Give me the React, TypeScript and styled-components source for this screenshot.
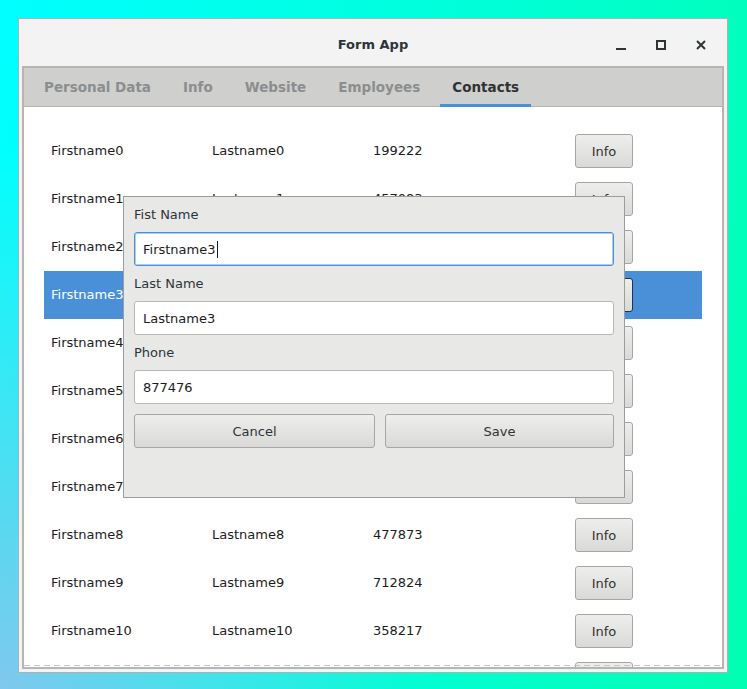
import React from "react"
import styled, { createGlobalStyle } from "styled-components"

const GlobalStyle = createGlobalStyle`
    html, body {
        margin: 0;
        padding: 0;
    }
    body {
        width: 747px;
        height: 689px;
        overflow: hidden;
        font-family: "DejaVu Sans", "Liberation Sans", sans-serif;
        background:
            radial-gradient(ellipse 430px 540px at 0% 100%, rgba(128, 200, 238, 1) 0%, rgba(128, 200, 238, 0) 100%),
            linear-gradient(100deg, #00ffff 0%, #00ffd8 55%, #00ffb2 100%);
    }
`

const Desktop = styled.div`
    padding: 18px 0 0 18px;
`

const Window = styled.div`
    width: 710px;
    height: 655px;
    box-sizing: border-box;
    border: 1px solid #b0b0ae;
    background: #f3f3f3;
    padding: 0 3px 3px;
    display: flex;
    flex-direction: column;
`

const TitleBar = styled.div`
    height: 47px;
    flex: 0 0 47px;
    box-sizing: border-box;
    padding-top: 4px;
    display: grid;
    grid-template-columns: 1fr auto 1fr;
    align-items: center;
    margin: 0 -3px;
`

const Title = styled.div`
    grid-column: 2;
    font-size: 13px;
    font-weight: bold;
    color: #2e3436;
`

const Controls = styled.div`
    grid-column: 3;
    justify-self: end;
    display: flex;
    padding-right: 6px;
`

const ControlButton = styled.div`
    width: 40px;
    height: 30px;
    display: flex;
    align-items: center;
    justify-content: center;
    color: #2e3436;
`

const Notebook = styled.div`
    flex: 1;
    display: flex;
    flex-direction: column;
    border: 2px solid #b5b5b2;
    min-height: 0;
`

const TabBar = styled.div`
    height: 38px;
    flex: 0 0 38px;
    display: flex;
    padding-left: 8px;
    gap: 8px;
    background: #cfcfcd;
    border-bottom: 1px solid #b3b3b0;
`

const Tab = styled.div<{ $active?: boolean }>`
    height: 39px;
    box-sizing: border-box;
    margin-bottom: -1px;
    padding: 1px 12px 0;
    display: flex;
    align-items: center;
    font-size: 13.5px;
    font-weight: bold;
    color: ${props => props.$active ? '#2e3436' : '#8b8e8f'};
    border-bottom: 3px solid ${props => props.$active ? '#4a90d9' : 'transparent'};
`

const Content = styled.div`
    position: relative;
    flex: 1;
    background: #ffffff;
    overflow: hidden;
    padding: 20px;
    &::after {
        content: "";
        position: absolute;
        left: 0;
        right: 0;
        bottom: 1px;
        height: 1px;
        background: repeating-linear-gradient(to right, #c4c4c4 0 6px, transparent 6px 10px);
    }
`

const List = styled.div`
    display: flex;
    flex-direction: column;
`

const Row = styled.div<{ $selected?: boolean }>`
    height: 48px;
    flex: 0 0 48px;
    display: grid;
    grid-template-columns: 161px 161px 202px auto;
    align-items: center;
    padding-left: 7px;
    font-size: 13px;
    color: ${props => props.$selected ? '#ffffff' : '#1c1c1c'};
    background: ${props => props.$selected ? '#4a90d9' : 'transparent'};
`

const Cell = styled.div`
    white-space: nowrap;
    margin-top: -1px;
`

const Button = styled.div<{ $dark?: boolean }>`
    height: 34px;
    box-sizing: border-box;
    display: flex;
    align-items: center;
    justify-content: center;
    border: 1px solid ${props => props.$dark ? '#22344a' : '#a6a6a4'};
    border-radius: 3px;
    background: linear-gradient(to bottom, #eeeeed, #d9d9d8);
    color: #2e3436;
    font-size: 13px;
`

const InfoButton = styled(Button)`
    width: 58px;
    justify-self: start;
`

const Dialog = styled.div`
    position: absolute;
    left: 99px;
    top: 89px;
    width: 502px;
    height: 302px;
    box-sizing: border-box;
    border: 1px solid #9c9c9a;
    background: #e8e8e7;
    padding: 0 10px;
    display: flex;
    flex-direction: column;
`

const FieldLabel = styled.div`
    height: 35px;
    line-height: 35px;
    font-size: 13px;
    color: #2e3436;
`

const Field = styled.div<{ $focused?: boolean }>`
    height: 34px;
    box-sizing: border-box;
    display: flex;
    align-items: center;
    padding: 0 8px;
    background: #ffffff;
    border: 1px solid ${props => props.$focused ? '#4a90d9' : '#b8b8b5'};
    box-shadow: ${props => props.$focused ? 'inset 0 0 0 1px rgba(74, 144, 217, 0.45)' : 'none'};
    border-radius: 3px;
    font-size: 13px;
    color: #1c1c1c;
`

const Caret = styled.span`
    display: inline-block;
    width: 1px;
    height: 17px;
    background: #1c1c1c;
    margin-left: 1px;
`

const DialogActions = styled.div`
    display: flex;
    gap: 10px;
    margin-top: 10px;
`

const CancelButton = styled(Button)`
    flex: 0 0 241px;
`

const SaveButton = styled(Button)`
    flex: 1;
`

const MinimizeIcon = () => (
    <svg width="16" height="16" viewBox="0 0 16 16">
        <rect x="3" y="11" width="10" height="2" fill="currentColor" />
    </svg>
)

const MaximizeIcon = () => (
    <svg width="16" height="16" viewBox="0 0 16 16">
        <rect x="4" y="4" width="8" height="8" fill="none" stroke="currentColor" strokeWidth="2" />
    </svg>
)

const CloseIcon = () => (
    <svg width="16" height="16" viewBox="0 0 16 16">
        <path d="M4 4 L12 12 M12 4 L4 12" stroke="currentColor" strokeWidth="2" />
    </svg>
)

const contacts = [
    { first: 'Firstname0', last: 'Lastname0', phone: '199222' },
    { first: 'Firstname1', last: 'Lastname1', phone: '457083' },
    { first: 'Firstname2', last: 'Lastname2', phone: '630915' },
    { first: 'Firstname3', last: 'Lastname3', phone: '877476' },
    { first: 'Firstname4', last: 'Lastname4', phone: '284610' },
    { first: 'Firstname5', last: 'Lastname5', phone: '935127' },
    { first: 'Firstname6', last: 'Lastname6', phone: '512384' },
    { first: 'Firstname7', last: 'Lastname7', phone: '169043' },
    { first: 'Firstname8', last: 'Lastname8', phone: '477873' },
    { first: 'Firstname9', last: 'Lastname9', phone: '712824' },
    { first: 'Firstname10', last: 'Lastname10', phone: '358217' },
    { first: 'Firstname11', last: 'Lastname11', phone: '804562' },
]

const tabs = ['Personal Data', 'Info', 'Website', 'Employees', 'Contacts']

export default function App() {
    const selected = 3
    return (
        <>
            <GlobalStyle />
            <Desktop>
                <Window>
                    <TitleBar>
                        <Title>Form App</Title>
                        <Controls>
                            <ControlButton><MinimizeIcon /></ControlButton>
                            <ControlButton><MaximizeIcon /></ControlButton>
                            <ControlButton><CloseIcon /></ControlButton>
                        </Controls>
                    </TitleBar>
                    <Notebook>
                        <TabBar>
                            {tabs.map(t => (
                                <Tab key={t} $active={t === 'Contacts'}>{t}</Tab>
                            ))}
                        </TabBar>
                        <Content>
                            <List>
                                {contacts.map((c, i) => (
                                    <Row key={c.first} $selected={i === selected}>
                                        <Cell>{c.first}</Cell>
                                        <Cell>{c.last}</Cell>
                                        <Cell>{c.phone}</Cell>
                                        <InfoButton $dark={i === selected}>Info</InfoButton>
                                    </Row>
                                ))}
                            </List>
                            <Dialog>
                                <FieldLabel>Fist Name</FieldLabel>
                                <Field $focused>Firstname3<Caret /></Field>
                                <FieldLabel>Last Name</FieldLabel>
                                <Field>Lastname3</Field>
                                <FieldLabel>Phone</FieldLabel>
                                <Field>877476</Field>
                                <DialogActions>
                                    <CancelButton>Cancel</CancelButton>
                                    <SaveButton>Save</SaveButton>
                                </DialogActions>
                            </Dialog>
                        </Content>
                    </Notebook>
                </Window>
            </Desktop>
        </>
    )
}
